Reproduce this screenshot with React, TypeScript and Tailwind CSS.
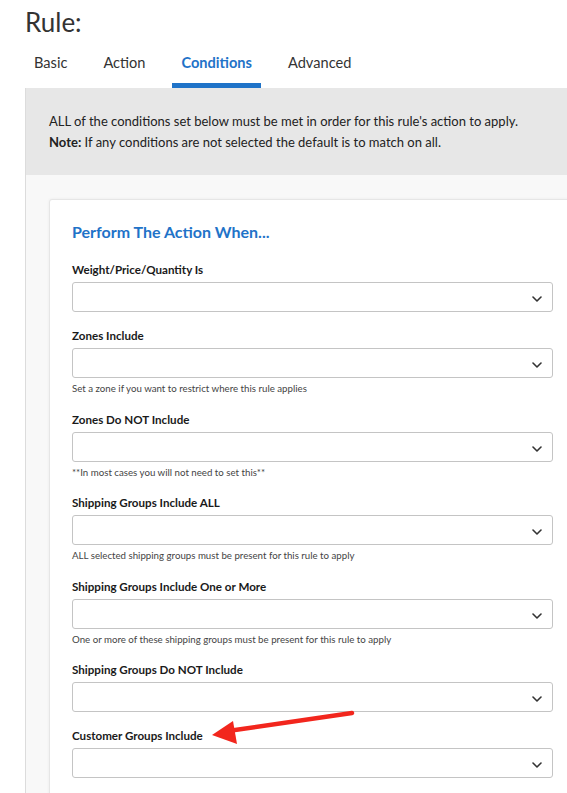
import React from "react";

type Field = {
  label: string;
  help?: string;
};

const fields: Field[] = [
  { label: "Weight/Price/Quantity Is" },
  { label: "Zones Include", help: "Set a zone if you want to restrict where this rule applies" },
  { label: "Zones Do NOT Include", help: "**In most cases you will not need to set this**" },
  { label: "Shipping Groups Include ALL", help: "ALL selected shipping groups must be present for this rule to apply" },
  {
    label: "Shipping Groups Include One or More",
    help: "One or more of these shipping groups must be present for this rule to apply",
  },
  { label: "Shipping Groups Do NOT Include" },
  { label: "Customer Groups Include" },
];

const tabs = ["Basic", "Action", "Conditions", "Advanced"];

function Chevron() {
  return (
    <svg width="10" height="6" viewBox="0 0 10 6" fill="none" className="absolute right-[10px] top-[13px]">
      <path d="M1 1l4 4 4-4" stroke="#333" strokeWidth="1.6" strokeLinecap="round" strokeLinejoin="round" />
    </svg>
  );
}

function SelectField({ label, help }: Field) {
  return (
    <div className="mb-[16.4px]">
      <label className="mb-1 block text-[11.6px] font-bold leading-4 text-[#1a1a1a]">{label}</label>
      <div className="relative h-[30px] w-[481px] rounded-[3px] border border-[#c4c4c4] bg-white">
        <Chevron />
      </div>
      {help ? <p className="mt-1 text-[9.7px] leading-[13px] text-[#444]">{help}</p> : null}
    </div>
  );
}

export default function App() {
  return (
    <div className="relative h-[793px] w-[567px] overflow-hidden bg-white font-['Lato','Open_Sans',sans-serif] text-[#333]">
      <h1 className="pl-[25px] pt-[4px] text-[26px] leading-[36px] text-[#333]">Rule:</h1>

      <nav className="mt-[13px] flex gap-[18px] pl-[25px]">
        {tabs.map((t) =>
          t === "Conditions" ? (
            <div key={t} className="border-b-[5px] border-[#1f73c8] px-[9px] pb-[10px] text-[14.6px] font-bold leading-[20px] text-[#1f73c8]">
              {t}
            </div>
          ) : (
            <div key={t} className="px-[9px] pb-[10px] text-[14.6px] leading-[20px] text-[#333]">
              {t}
            </div>
          )
        )}
      </nav>

      <div className="ml-[25px] w-[620px] border-l border-[#dcdcdc]">
        <div className="bg-[#e7e7e7] px-[23px] pb-[22px] pt-[23px] text-[13px] leading-[21px] text-[#222]">
          <p>ALL of the conditions set below must be met in order for this rule's action to apply.</p>
          <p>
            <span className="font-bold">Note:</span> If any conditions are not selected the default is to match on all.
          </p>
        </div>

        <div className="bg-[#f8f8f8] pl-[23px] pt-[24px]">
          <div className="rounded-t-[3px] border border-[#e6e6e6] bg-white pl-[22px] pt-[20px] shadow-[0_0_3px_rgba(0,0,0,0.06)]">
            <h2 className="mb-[18px] text-[16px] font-bold leading-[24px] text-[#1f73c8]">Perform The Action When...</h2>
            {fields.map((f) => (
              <SelectField key={f.label} {...f} />
            ))}
          </div>
        </div>
      </div>

      <svg className="absolute left-0 top-0" width="567" height="793" viewBox="0 0 567 793" fill="none">
        <line x1="352" y1="713" x2="228" y2="731" stroke="#f2261d" strokeWidth="4.5" strokeLinecap="round" />
        <polygon points="212,735 233,721 237,744" fill="#f2261d" />
      </svg>
    </div>
  );
}
